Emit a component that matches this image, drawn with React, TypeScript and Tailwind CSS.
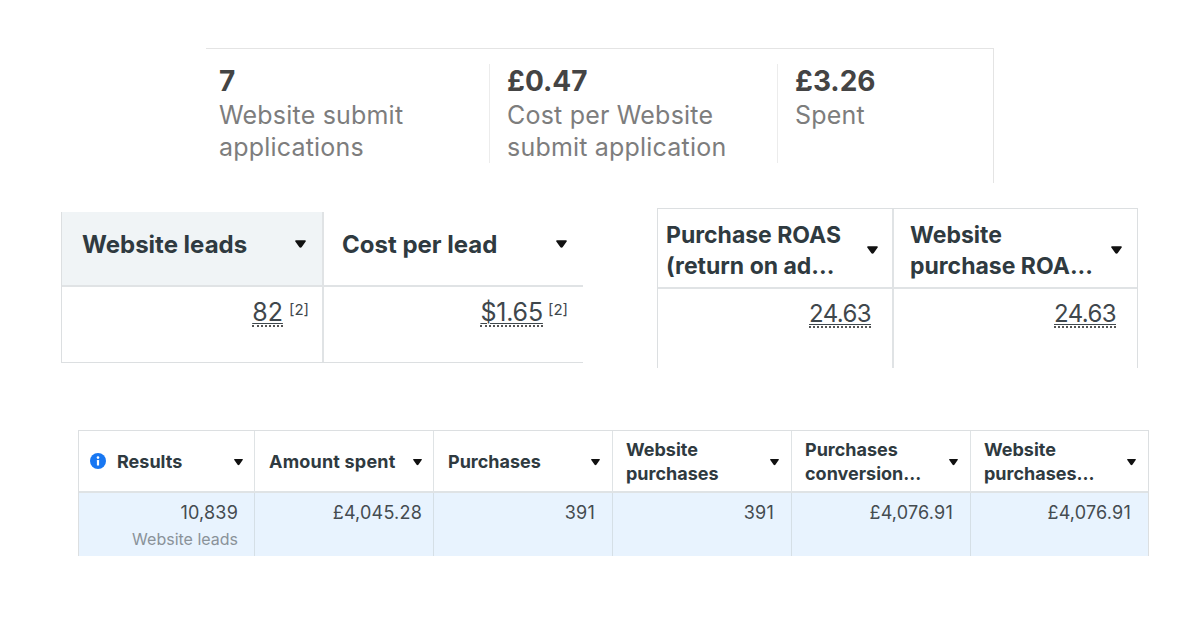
import React from 'react';

const font = "font-['Inter','Liberation_Sans',sans-serif]";

const Caret = ({ className = '' }: { className?: string }) => (
  <svg viewBox="0 0 12 8" className={`shrink-0 ${className}`} fill="#111">
    <path d="M1.2 1.2C.8.7 1.1 0 1.8 0h8.4c.7 0 1 .7.6 1.2L7 6.6c-.5.6-1.5.6-2 0z" />
  </svg>
);

const Stat = ({ value, label, className }: { value: string; label: React.ReactNode; className: string }) => (
  <div className={`h-[99px] ${className}`}>
    <div className="text-[28px] leading-[34px] font-bold text-[#444444]">{value}</div>
    <div className="text-[25px] leading-[32px] tracking-[0.2px] text-[#7d7d7d] mt-px">{label}</div>
  </div>
);

const Dotted = ({ children }: { children: React.ReactNode }) => (
  <span className="inline-block border-b-2 border-dotted border-[#555] leading-[25px] underline underline-offset-2 decoration-1">{children}</span>
);

const MidHead = ({ title, className = '' }: { title: string; className?: string }) => (
  <div className={`flex items-center justify-between pb-[8px] text-[24px] font-bold text-[#2f3a40] ${className}`}>
    <span>{title}</span>
    <Caret className="w-[13px] h-[9px]" />
  </div>
);

const BigValue = ({ value, note, className = '' }: { value: string; note?: string; className?: string }) => (
  <div className={`flex justify-end items-start text-[#3f474c] ${className}`}>
    <Dotted>{value}</Dotted>
    {note && <span className={`text-[15px] leading-[18px] tracking-normal mt-[1px] ${note}`}>[2]</span>}
  </div>
);

const RoasHead = ({ lines, className = '' }: { lines: string[]; className?: string }) => (
  <div className={`flex items-center justify-between pt-[6px] text-[23px] leading-[31px] font-bold text-[#2f3a40] ${className}`}>
    <div>
      {lines.map((l) => (
        <div key={l}>{l}</div>
      ))}
    </div>
    <Caret className="w-[13px] h-[9px] -mt-[2px]" />
  </div>
);

const columns = [
  { lines: ['Results'], value: '10,839', head: 'pl-[11px] pr-[10px] border-r', cell: 'pr-[16px] border-r' },
  { lines: ['Amount spent'], value: '£4,045.28', head: 'pl-[14px] pr-[10px] border-r tracking-[0.2px]', cell: 'pr-[11px] border-r' },
  { lines: ['Purchases'], value: '391', head: 'pl-[14px] pr-[11px] border-r', cell: 'pr-[17px] border-r' },
  { lines: ['Website', 'purchases'], value: '391', head: 'pl-[13px] pr-[11px] border-r', cell: 'pr-[17px] border-r' },
  { lines: ['Purchases', 'conversion...'], value: '£4,076.91', head: 'pl-[13px] pr-[11px] border-r', cell: 'pr-[17px] border-r' },
  { lines: ['Website', 'purchases...'], value: '£4,076.91', head: 'pl-[13px] pr-[11px]', cell: 'pr-[17px]' },
];

export default function App() {
  return (
    <div className={`w-[1200px] h-[618px] bg-white overflow-hidden ${font}`}>
      <div className="ml-[206px] mt-[48px] w-[788px] h-[135px] border-t border-r border-[#e4e4e4] pt-[15px] flex">
        <Stat value="7" className="w-[283px] pl-[13px]" label={<>Website submit<br />applications</>} />
        <Stat value="£0.47" className="w-[288px] pl-[17px] border-l border-[#ececec]" label={<>Cost per Website<br />submit application</>} />
        <Stat value="£3.26" className="w-[216px] pl-[17px] border-l border-[#ececec]" label="Spent" />
      </div>

      <div className="mt-[25px] flex items-start pl-[61px]">
        <div className="mt-[4px] w-[522px] h-[151px] border-l border-b border-[#dcdfe1] grid grid-cols-[262px_259px] grid-rows-[75px_75px]">
          <MidHead title="Website leads" className="pl-[20px] pr-[15px] bg-[#f0f4f6] border-b-2 border-r-2 border-[#e0e3e5]" />
          <MidHead title="Cost per lead" className="pl-[18px] pr-[15px] border-b-2 border-[#e0e3e5]" />
          <BigValue value="82" note="ml-[6px]" className="text-[25px] pt-[13px] pr-[13px] border-r-2 border-[#e0e3e5]" />
          <BigValue value="$1.65" note="ml-[5px]" className="text-[25px] tracking-[-0.2px] pt-[13px] pr-[15px]" />
        </div>

        <div className="ml-[74px] w-[481px] h-[160px] border border-b-0 border-[#dcdfe1] grid grid-cols-[236px_243px] grid-rows-[80px_79px]">
          <RoasHead lines={['Purchase ROAS', '(return on ad...']} className="pl-[8px] pr-[13px] border-b-2 border-r-2 border-[#e0e3e5]" />
          <RoasHead lines={['Website', 'purchase ROA...']} className="pl-[16px] pr-[14px] border-b-2 border-[#e0e3e5]" />
          <BigValue value="24.63" className="text-[24px] tracking-[-0.6px] pt-[12px] pr-[21px] border-r-2 border-[#e0e3e5]" />
          <BigValue value="24.63" className="text-[24px] tracking-[-0.6px] pt-[12px] pr-[21px]" />
        </div>
      </div>

      <div className="mt-[62px] ml-[78px] w-[1071px] border-t border-l border-r border-[#dcdfe1] grid grid-cols-[176px_179px_179px_179px_179px_177px] grid-rows-[62px_63px]">
        {columns.map((c) => (
          <div key={c.value + c.lines[0]} className={`flex items-center justify-between pt-[2px] text-[18px] leading-[24px] font-bold text-[#2f3a40] border-b-2 border-[#dfe3e5] ${c.head}`}>
            <div className="flex items-center">
              {c.lines[0] === 'Results' && (
                <svg viewBox="0 0 16 16" className="w-[16px] h-[16px] mr-[11px] -mt-[3px]">
                  <circle cx="8" cy="8" r="8" fill="#1877f2" />
                  <rect x="6.9" y="7" width="2.2" height="5.6" rx=".5" fill="#fff" />
                  <circle cx="8" cy="4.6" r="1.3" fill="#fff" />
                </svg>
              )}
              <div>
                {c.lines.map((l) => (
                  <div key={l}>{l}</div>
                ))}
              </div>
            </div>
            <Caret className="w-[11px] h-[7px]" />
          </div>
        ))}
        {columns.map((c) => (
          <div key={c.value + c.lines[0]} className={`bg-[#e8f3fe] text-right pt-[8px] text-[18px] leading-[24px] tracking-[0.2px] text-[#444b50] border-[#d5dfe6] ${c.cell}`}>
            {c.value}
            {c.lines[0] === 'Results' && <div className="text-[16px] leading-[22px] tracking-normal mt-[3px] text-[#8a9299]">Website leads</div>}
          </div>
        ))}
      </div>
    </div>
  );
}
